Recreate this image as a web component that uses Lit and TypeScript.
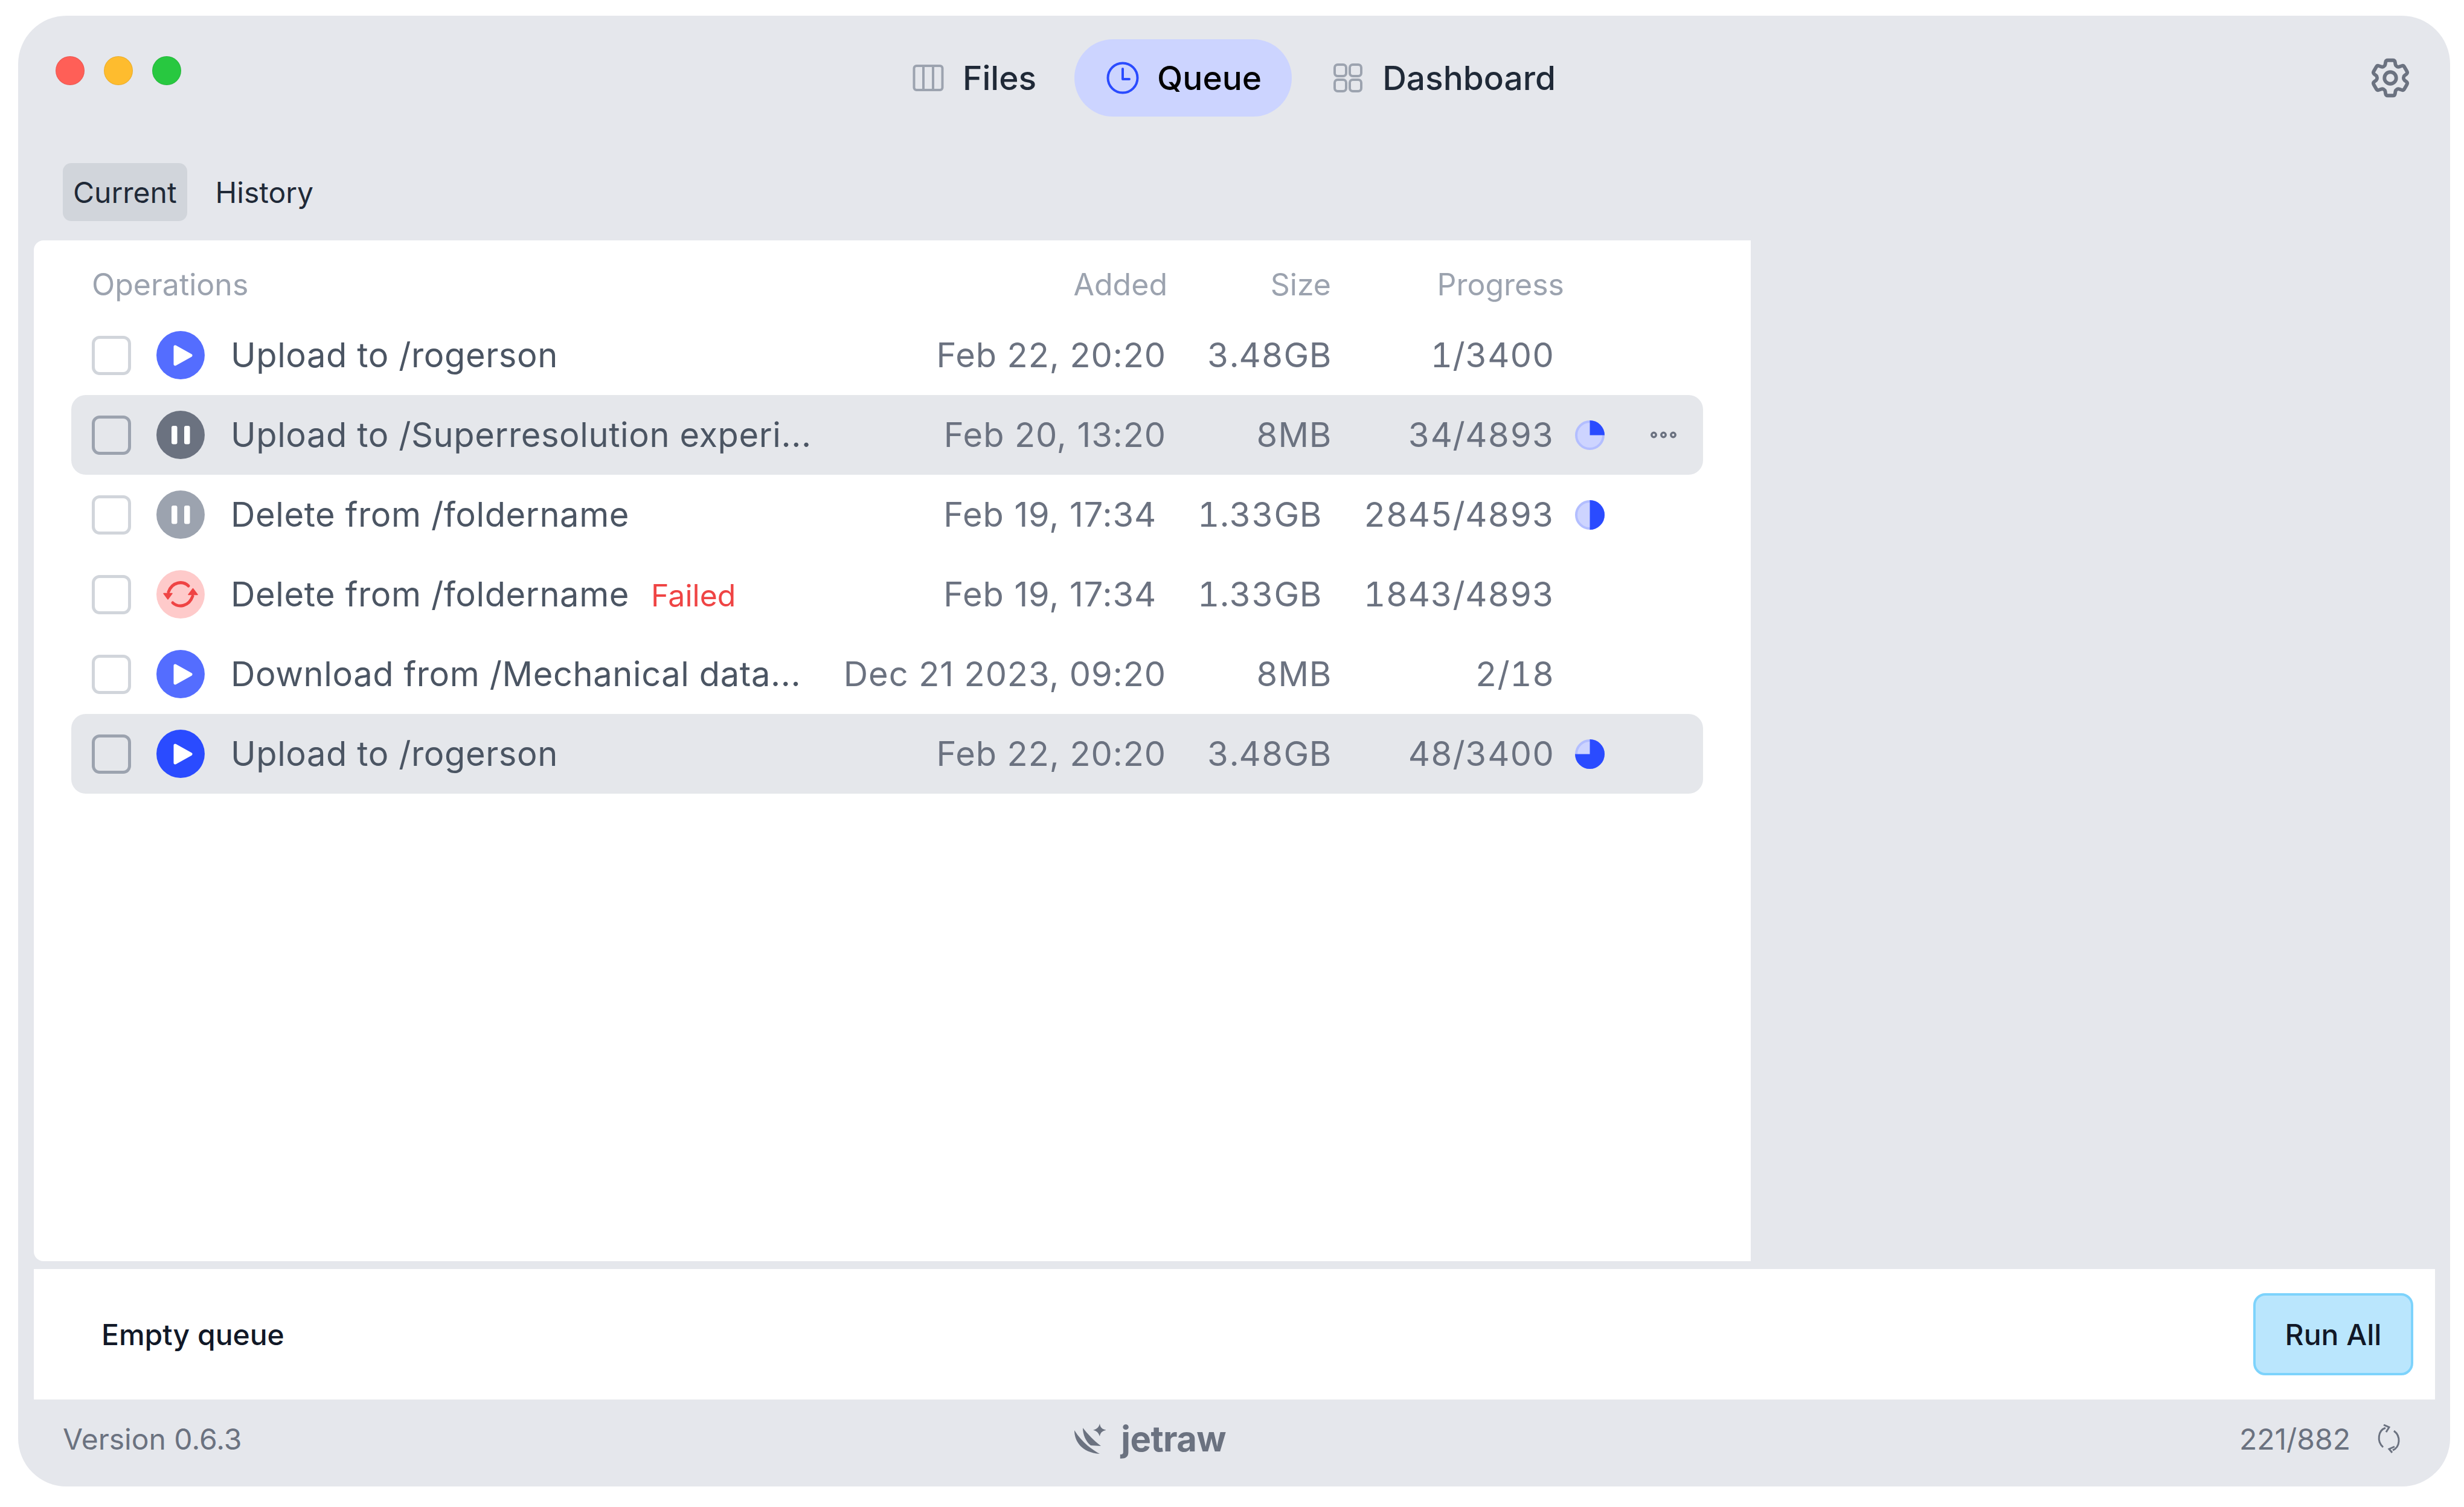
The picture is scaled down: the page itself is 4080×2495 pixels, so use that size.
import { LitElement, html, css, svg } from "lit";
import { customElement } from "lit/decorators.js";

type Row = { name: string; failed?: boolean; date: string; size: string; prog: string; icon: string; pie?: number; hl?: boolean; more?: boolean; inset?: boolean };

const rows: Row[] = [
  { name: "Upload to /rogerson", date: "Feb 22, 20:20", size: "3.48GB", prog: "1/3400", icon: "play" },
  { name: "Upload to /Superresolution experi...", date: "Feb 20, 13:20", size: "8MB", prog: "34/4893", icon: "pause-dark", pie: 1, hl: true, more: true },
  { name: "Delete from /foldername", date: "Feb 19, 17:34", size: "1.33GB", prog: "2845/4893", icon: "pause", pie: 2, inset: true },
  { name: "Delete from /foldername", failed: true, date: "Feb 19, 17:34", size: "1.33GB", prog: "1843/4893", icon: "retry", inset: true },
  { name: "Download from /Mechanical data...", date: "Dec 21 2023, 09:20", size: "8MB", prog: "2/18", icon: "play" },
  { name: "Upload to /rogerson", date: "Feb 22, 20:20", size: "3.48GB", prog: "48/3400", icon: "play-strong", pie: 3, hl: true },
];

const playGlyph = svg`<path d="M31 26 L57 40.5 L31 55 Z" fill="#fff" stroke="#fff" stroke-width="5" stroke-linejoin="round"/>`;
const pauseGlyph = svg`<rect x="25" y="25" width="9.5" height="30.5" rx="3" fill="#fff"/><rect x="46" y="25" width="9.5" height="30.5" rx="3" fill="#fff"/>`;
const retryGlyph = svg`<g fill="none" stroke="#ef4444" stroke-width="5" stroke-linecap="round"><path d="M53 26 C44 17 26 19 20 36"/><path d="M27 54 C37 63 54 60 60 43"/></g><path d="M12 38.5 L26 38.5 L19 48 Z M53 40.5 L68 40.5 L60.5 30.5 Z" fill="#ef4444" stroke="#ef4444" stroke-width="1.5" stroke-linejoin="round"/>`;

function statusIcon(kind: string) {
  const bg: Record<string, string> = { play: "#546dff", "play-strong": "#2a4bff", "pause-dark": "#6b7280", pause: "#9ca3af", retry: "#fecaca" };
  const glyph = kind.startsWith("play") ? playGlyph : kind === "retry" ? retryGlyph : pauseGlyph;
  return html`<svg class="status" viewBox="0 0 80 80"><circle cx="40" cy="40" r="40" fill=${bg[kind]}/>${glyph}</svg>`;
}

function pie(q: number) {
  const slices: Record<number, string> = {
    1: "M24.5 24.5 V0 A24.5 24.5 0 0 1 49 24.5 Z",
    2: "M24.5 0 A24.5 24.5 0 0 1 24.5 49 Z",
    3: "M24.5 24.5 V0 A24.5 24.5 0 1 1 0 24.5 Z",
  };
  return html`<svg class="pie" viewBox="0 0 49 49"><circle cx="24.5" cy="24.5" r="22.5" fill="#cdd4ff" stroke="#b3beff" stroke-width="4"/><path d=${slices[q]} fill="#2a4bff"/></svg>`;
}

@customElement("app-root")
export class AppRoot extends LitElement {
  static styles = css`
    :host { display: block; width: 4080px; height: 2495px; box-sizing: border-box; padding: 26px 23px 34px 30px; background: #fff; font-family: Inter, "Liberation Sans", sans-serif; }
    * { box-sizing: border-box; }
    .window { width: 4027px; height: 2435px; background: #e5e7ec; border-radius: 80px; display: flex; flex-direction: column; padding-top: 39px; overflow: hidden; }
    .titlebar { display: flex; height: 128px; padding-left: 62px; padding-right: 60px; flex: none; }
    .lights { display: flex; gap: 32px; width: 208px; margin-top: 28px; flex: none; }
    .light { width: 48px; height: 48px; border-radius: 50%; border: 1px solid rgba(0,0,0,0.08); }
    .red { background: #ff5f57; } .yellow { background: #febc2e; } .green { background: #28c840; }
    .nav { display: flex; gap: 13px; margin-left: 1157px; }
    .nav-item { display: flex; align-items: center; gap: 29px; padding: 0 50px 0 52px; height: 128px; border-radius: 64px; font-size: 55px; font-weight: 500; color: #1f2937; }
    .nav-item.active { background: #ccd4ff; color: #000; }
    .nav-icon { width: 56px; height: 56px; flex: none; display: block; }
    .gear { width: 78px; height: 78px; margin-left: auto; align-self: center; display: block; }
    .tabs { display: flex; gap: 30px; margin: 77px 0 32px 74px; flex: none; }
    .tab { height: 96px; padding: 0 17px; border-radius: 14px; display: flex; align-items: center; font-size: 48px; color: #1f2937; }
    .tab.active { background: #d1d5db; }
    .panel { width: 2843px; height: 1690px; margin-left: 26px; background: #fff; border-radius: 16px 0 0 16px; padding: 0 0 0 62px; flex: none; }
    .head { display: flex; height: 124px; padding-top: 22px; align-items: center; font-size: 50px; color: #9ca3af; }
    .head .ops { margin-left: 34px; width: 1781px; flex: none; }
    .head .c-added { width: 0; flex: none; display: flex; justify-content: flex-end; white-space: nowrap; }
    .head .c-size { width: 271px; text-align: right; flex: none; }
    .head .c-prog { width: 386px; text-align: right; flex: none; }
    .row { width: 2702px; height: 132px; border-radius: 24px; display: flex; align-items: center; padding-left: 34px; font-size: 56px; letter-spacing: 0.6px; color: #6b7280; }
    .row.hl { background: #e5e7eb; }
    .check { width: 65px; height: 65px; border: 5px solid #d1d5db; border-radius: 13px; flex: none; margin-right: 42px; }
    .row.hl .check { border-color: #9ca3af; }
    .status { width: 80px; height: 80px; flex: none; margin-right: 43px; display: block; }
    .name { width: 1549px; flex: none; color: #4b5563; white-space: nowrap; display: flex; align-items: baseline; }
    .failed { color: #ef4444; font-size: 50px; margin-left: 36px; letter-spacing: 0; }
    .date { width: 0; flex: none; display: flex; justify-content: flex-end; white-space: nowrap; letter-spacing: 0.9px; }
    .size { width: 274px; flex: none; text-align: right; font-variant-numeric: tabular-nums; }
    .prog { width: 369px; flex: none; text-align: right; font-variant-numeric: tabular-nums; }
    .row.inset .date, .row.inset .size { position: relative; left: -16px; }
    .pie { width: 49px; height: 49px; margin-left: 34px; flex: none; display: block; }
    .more { width: 43px; height: 12px; margin-left: 76px; flex: none; display: block; }
    .actions { width: 3976px; height: 216px; margin: 13px 0 0 26px; background: #fff; display: flex; align-items: center; justify-content: space-between; padding: 0 36px 0 112px; flex: none; }
    .empty { font-size: 48px; font-weight: 500; color: #111827; }
    .run { width: 265px; height: 136px; border: 4px solid #7dd3fc; background: #bae6fd; border-radius: 20px; display: flex; align-items: center; justify-content: center; font-size: 48px; font-weight: 500; color: #111827; }
    .footer { height: 144px; display: flex; align-items: center; padding: 0 82px 14px 74px; flex: none; color: #6b7280; font-size: 48px; }
    .version { flex: none; }
    .brand { display: flex; align-items: center; gap: 25px; margin-left: 1378px; font-size: 58px; font-weight: 700; color: #6b7280; letter-spacing: -0.6px; }
    .logo { width: 53px; height: 51px; display: block; flex: none; }
    .count { margin-left: auto; }
    .sync { width: 39px; height: 48px; margin-left: 44px; display: block; flex: none; }
  `;

  render() {
    return html`
      <div class="window">
        <div class="titlebar">
          <div class="lights"><span class="light red"></span><span class="light yellow"></span><span class="light green"></span></div>
          <div class="nav">
            <div class="nav-item">
              <svg class="nav-icon" viewBox="0 0 56 56" fill="none" stroke="#9ca3af" stroke-width="4"><rect x="4.5" y="8" width="47" height="40" rx="4"/><path d="M20 8V48M36 8V48"/></svg>
              Files
            </div>
            <div class="nav-item active">
              <svg class="nav-icon" viewBox="0 0 56 56" fill="none" stroke="#2a4bff" stroke-width="4" stroke-linecap="round" stroke-linejoin="round"><circle cx="28" cy="28" r="24.5"/><path d="M28 13V30H39"/></svg>
              Queue
            </div>
            <div class="nav-item">
              <svg class="nav-icon" viewBox="0 0 56 56" fill="none" stroke="#9ca3af" stroke-width="4"><rect x="6" y="6" width="19" height="19" rx="5"/><rect x="31" y="6" width="19" height="19" rx="5"/><rect x="6" y="31" width="19" height="19" rx="5"/><rect x="31" y="31" width="19" height="19" rx="5"/></svg>
              Dashboard
            </div>
          </div>
          <svg class="gear" viewBox="0 0 24 24" fill="none" stroke="#6b7280" stroke-width="1.8" stroke-linejoin="round"><path d="M9.594 3.94c.09-.542.56-.94 1.11-.94h2.593c.55 0 1.02.398 1.11.94l.213 1.281c.063.374.313.686.645.87.074.04.147.083.22.127.325.196.72.257 1.075.124l1.217-.456a1.125 1.125 0 0 1 1.37.49l1.296 2.247a1.125 1.125 0 0 1-.26 1.431l-1.003.827c-.293.241-.438.613-.43.992a7.723 7.723 0 0 1 0 .255c-.008.378.137.75.43.991l1.004.827c.424.35.534.955.26 1.43l-1.298 2.247a1.125 1.125 0 0 1-1.369.491l-1.217-.456c-.355-.133-.75-.072-1.076.124a6.47 6.47 0 0 1-.22.128c-.331.183-.581.495-.644.869l-.213 1.281c-.09.543-.56.94-1.11.94h-2.594c-.55 0-1.019-.398-1.11-.94l-.213-1.281c-.062-.374-.312-.686-.644-.87a6.52 6.52 0 0 1-.22-.127c-.325-.196-.72-.257-1.076-.124l-1.217.456a1.125 1.125 0 0 1-1.369-.49l-1.297-2.247a1.125 1.125 0 0 1 .26-1.431l1.004-.827c.292-.24.437-.613.43-.991a6.932 6.932 0 0 1 0-.255c.007-.38-.138-.751-.43-.992l-1.004-.827a1.125 1.125 0 0 1-.26-1.43l1.297-2.247a1.125 1.125 0 0 1 1.37-.491l1.216.456c.356.133.751.072 1.076-.124.072-.044.146-.086.22-.128.332-.183.582-.495.644-.869l.214-1.28Z"/><circle cx="12" cy="12" r="3"/></svg>
        </div>
        <div class="tabs"><div class="tab active">Current</div><div class="tab">History</div></div>
        <div class="panel">
          <div class="head">
            <div class="ops">Operations</div>
            <div class="c-added">Added</div>
            <div class="c-size">Size</div>
            <div class="c-prog">Progress</div>
          </div>
          ${rows.map((r) => html`
            <div class="row ${r.hl ? "hl" : ""} ${r.inset ? "inset" : ""}">
              <div class="check"></div>
              ${statusIcon(r.icon)}
              <div class="name">${r.name}${r.failed ? html`<span class="failed">Failed</span>` : ""}</div>
              <div class="date">${r.date}</div>
              <div class="size">${r.size}</div>
              <div class="prog">${r.prog}</div>
              ${r.pie ? pie(r.pie) : ""}
              ${r.more ? html`<svg class="more" viewBox="0 0 43 12" fill="none" stroke="#6b7280" stroke-width="3.5"><circle cx="5.5" cy="6" r="3.7"/><circle cx="21.5" cy="6" r="3.7"/><circle cx="37.5" cy="6" r="3.7"/></svg>` : ""}
            </div>`)}
        </div>
        <div class="actions"><div class="empty">Empty queue</div><div class="run">Run All</div></div>
        <div class="footer">
          <div class="version">Version 0.6.3</div>
          <div class="brand">
            <svg class="logo" viewBox="0 0 53 51" fill="#6b7280"><path d="M1 11 C1 28 12 48 43 50 C32 44 14 32 1 11 Z"/><path d="M15 7 C15 18 20 30 28 36 L45 37 C33 28 23 17 15 7 Z"/><path d="M43 0 C44 7 47 9 54 10.5 C47 12 44 15 43 21 C41 15 38 12 32 10.5 C38 9 41 7 43 0 Z"/></svg>
            <span>jetraw</span>
          </div>
          <div class="count">221/882</div>
          <svg class="sync" viewBox="0 0 39 48" fill="none" stroke="#6b7280" stroke-width="3"><path d="M14 6 C2 10 -1 28 10 38"/><path d="M26 43 C38 38 40 20 28 11"/><path d="M11 1 L20 5 L15 13"/><path d="M29 37 L20 41 L25 47"/></svg>
        </div>
      </div>
    `;
  }
}
